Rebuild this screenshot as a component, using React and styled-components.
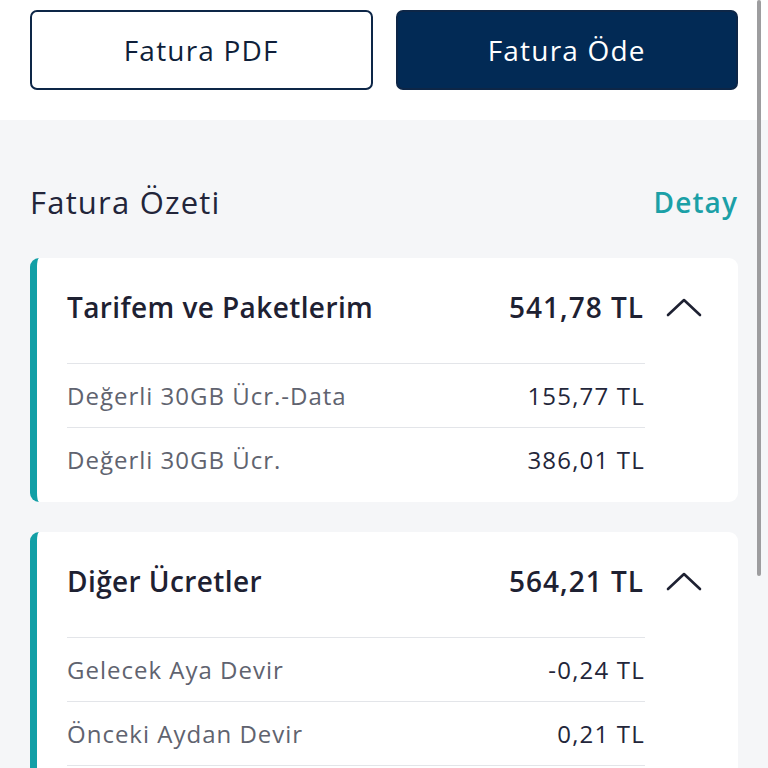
import React from 'react';
import styled, { createGlobalStyle } from 'styled-components';

const GlobalStyle = createGlobalStyle`
  html, body {
    margin: 0;
    padding: 0;
    overflow: hidden;
    background: #f5f6f8;
  }
  body {
    font-family: "Open Sans", Lato, sans-serif;
  }
`;

const Page = styled.div`
  position: relative;
  width: 768px;
  height: 768px;
  overflow: hidden;
`;

const ButtonBar = styled.div`
  background: #ffffff;
  display: flex;
  gap: 23px;
  padding: 10px 30px 30px 30px;
`;

const ActionButton = styled.button`
  flex: 1;
  height: 80px;
  box-sizing: border-box;
  border-radius: 7px;
  border: 2px solid #0d2647;
  background: ${(p) => (p.primary ? '#022a55' : '#ffffff')};
  color: ${(p) => (p.primary ? '#ffffff' : '#0f1f3a')};
  font-family: "Open Sans", sans-serif;
  font-size: 28px;
  letter-spacing: 1.2px;
  font-weight: 500;
  cursor: pointer;
`;

const Summary = styled.div`
  padding: 64px 30px 0 30px;
`;

const SummaryHeader = styled.div`
  display: flex;
  justify-content: space-between;
  align-items: center;
  height: 36px;
  margin-bottom: 38px;
`;

const SummaryTitle = styled.div`
  font-size: 31px;
  letter-spacing: 1.2px;
  color: #22253a;
`;

const DetailLink = styled.a`
  font-size: 28px;
  letter-spacing: 1.1px;
  font-weight: 600;
  color: #1ba0a7;
  text-decoration: none;
`;

const Card = styled.div`
  background: #ffffff;
  border-radius: 9px;
  border-left: 7px solid #129fa6;
  padding: 30px 36px 11px 30px;
  margin-bottom: 30px;
`;

const CardHeader = styled.div`
  display: flex;
  align-items: center;
  height: 38px;
  margin-bottom: 37px;
`;

const CardTitle = styled.div`
  flex: 1;
  font-size: 28px;
  letter-spacing: 0.4px;
  font-weight: 600;
  color: #1e2132;
`;

const CardAmount = styled.div`
  font-size: 28px;
  letter-spacing: 1px;
  font-weight: 600;
  color: #1e2132;
`;

const Chevron = styled.svg`
  width: 36px;
  height: 20px;
  margin-left: 22px;
`;

const Rows = styled.div`
  margin-right: 57px;
  border-bottom: ${(p) => (p.continues ? '1.5px solid #e3e5e9' : 'none')};
`;

const Row = styled.div`
  display: flex;
  justify-content: space-between;
  align-items: center;
  height: 63px;
  border-top: 1.5px solid #e3e5e9;
`;

const RowLabel = styled.span`
  font-size: 24px;
  letter-spacing: 1px;
  color: #60636f;
`;

const RowValue = styled.span`
  font-size: 24px;
  letter-spacing: 1.2px;
  font-weight: 500;
  color: #23263a;
`;

const Scrollbar = styled.div`
  position: absolute;
  top: 0;
  left: 757px;
  width: 4px;
  height: 576px;
  border-radius: 2px;
  background: #9d9d9f;
`;

const sections = [
  {
    title: 'Tarifem ve Paketlerim',
    total: '541,78 TL',
    rows: [
      { label: 'Değerli 30GB Ücr.-Data', value: '155,77 TL' },
      { label: 'Değerli 30GB Ücr.', value: '386,01 TL' },
    ],
  },
  {
    title: 'Diğer Ücretler',
    total: '564,21 TL',
    continues: true,
    rows: [
      { label: 'Gelecek Aya Devir', value: '-0,24 TL' },
      { label: 'Önceki Aydan Devir', value: '0,21 TL' },
    ],
  },
];

const App = () => (
  <Page>
    <GlobalStyle />
    <ButtonBar>
      <ActionButton>Fatura PDF</ActionButton>
      <ActionButton primary>Fatura Öde</ActionButton>
    </ButtonBar>
    <Summary>
      <SummaryHeader>
        <SummaryTitle>Fatura Özeti</SummaryTitle>
        <DetailLink href="#">Detay</DetailLink>
      </SummaryHeader>
      {sections.map((s) => (
        <Card key={s.title}>
          <CardHeader>
            <CardTitle>{s.title}</CardTitle>
            <CardAmount>{s.total}</CardAmount>
            <Chevron viewBox="0 0 36 20">
              <polyline points="2,18 18,3 34,18" fill="none" stroke="#1e2132" strokeWidth="2.6" strokeLinecap="round" strokeLinejoin="round" />
            </Chevron>
          </CardHeader>
          <Rows continues={s.continues}>
            {s.rows.map((r) => (
              <Row key={r.label}>
                <RowLabel>{r.label}</RowLabel>
                <RowValue>{r.value}</RowValue>
              </Row>
            ))}
          </Rows>
        </Card>
      ))}
    </Summary>
    <Scrollbar />
  </Page>
);

export default App;
